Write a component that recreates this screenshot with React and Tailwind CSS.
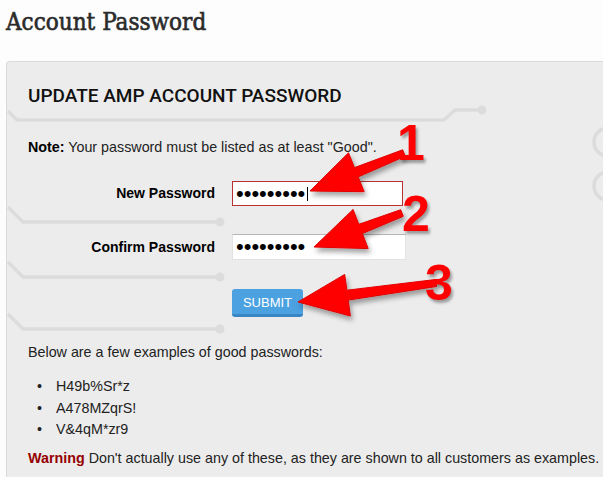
import React from 'react';

// builds a skitch-style arrow polygon from the tip back to the tail
const arrowPoints = (tip, tail, headLen = 50, headW = 21, neckW = 5, tailW = 3.5) => {
  const dx = tail[0] - tip[0];
  const dy = tail[1] - tip[1];
  const len = Math.hypot(dx, dy);
  const ux = dx / len;
  const uy = dy / len;
  const px = -uy;
  const py = ux;
  const bx = tip[0] + ux * headLen;
  const by = tip[1] + uy * headLen;
  const pts = [
    [tip[0], tip[1]],
    [bx + px * headW, by + py * headW],
    [bx + px * neckW, by + py * neckW],
    [tail[0] + px * tailW, tail[1] + py * tailW],
    [tail[0] - px * tailW, tail[1] - py * tailW],
    [bx - px * neckW, by - py * neckW],
    [bx - px * headW, by - py * headW],
  ];
  return pts.map((p) => p.map((v) => v.toFixed(1)).join(',')).join(' ');
};

const arrows = [
  { tip: [310, 191], tail: [404, 153] },
  { tip: [314, 247], tail: [402, 213] },
  { tip: [298, 302], tail: [436, 283] },
];

const numbers = [
  { n: '1', cls: 'left-[397px] top-[118px]' },
  { n: '2', cls: 'left-[402px] top-[189px]' },
  { n: '3', cls: 'left-[425px] top-[258px]' },
];

const PanelDecor = () => (
  <svg className="absolute left-0 top-0 pointer-events-none" width="620" height="440">
    <g transform="translate(-6,-61)" fill="none" stroke="#dcdcdc" strokeWidth="3.5">
      <polyline points="7,110 16,119 443,119 454,109 478,109" />
      <circle cx="481" cy="109" r="4.5" fill="#dcdcdc" stroke="none" />
      {[221, 276, 328].map((y) => (
        <g key={y}>
          <polyline points={`7,${y - 15} 22,${y} 216,${y}`} />
          <circle cx="219" cy={y} r="4.5" fill="#dcdcdc" stroke="none" />
        </g>
      ))}
      <circle cx="607" cy="141" r="14" />
      <circle cx="607" cy="185" r="14" />
    </g>
  </svg>
);

const Dots = () => (
  <span className="text-[22px] leading-none tracking-[0px] text-black">•••••••••</span>
);

export default function App() {
  return (
    <div
      className="relative w-[603px] h-[477px] overflow-hidden bg-[#fdfdfd] text-[#222]"
      style={{ fontFamily: '"Liberation Sans", Arial, sans-serif' }}
    >
      <h1
        className="pl-[6px] pt-[6px] text-[24px] leading-[32px] font-normal text-[#2b2b2b] [-webkit-text-stroke:0.6px_#2b2b2b]"
        style={{ fontFamily: '"DejaVu Serif Condensed", "DejaVu Serif", serif' }}
      >
        Account Password
      </h1>

      <div className="relative ml-[6px] mt-[23px] w-[620px] h-[440px] bg-[#ececec] border-t border-l border-[#dadada] rounded-tl-[4px] pl-[21px] pt-[23px]">
        <PanelDecor />
        <div className="relative">
          <h2 className="text-[19px] leading-[22px] font-medium text-[#111]" style={{ fontFamily: 'Roboto, "Liberation Sans", sans-serif' }}>
            UPDATE AMP ACCOUNT PASSWORD
          </h2>

          <p className="mt-[30px] text-[14.3px] leading-[20px]">
            <span className="font-bold text-black">Note:</span> Your password must be listed as at least "Good".
          </p>

          <div className="mt-[24px] flex items-center">
            <label className="w-[187px] text-right text-[14px] font-bold text-black">New Password</label>
            <div className="ml-[17px] w-[171px] h-[25px] bg-white border border-[#b83232] flex items-center pl-[3px]">
              <Dots />
              <span className="ml-[2px] w-px h-[14px] bg-black" />
            </div>
          </div>

          <div className="mt-[28px] flex items-center">
            <label className="w-[187px] text-right text-[14px] font-bold text-black">Confirm Password</label>
            <div className="ml-[17px] w-[174px] h-[26px] bg-white border border-[#e2e2e2] border-t-[#b5b5b5] flex items-center pl-[3px]">
              <Dots />
            </div>
          </div>

          <button className="mt-[29px] ml-[204px] w-[71px] h-[28px] rounded-[3px] bg-[#4ca1e0] border-b-[3px] border-[#3a86c4] text-white text-[13px] leading-none pt-[2px]">
            SUBMIT
          </button>

          <p className="mt-[25px] text-[14.3px] leading-[20px]">Below are a few examples of good passwords:</p>

          <ul className="mt-[14px] text-[14.3px] leading-[21.5px]">
            {['H49b%Sr*z', 'A478MZqrS!', 'V&4qM*zr9'].map((pw) => (
              <li key={pw} className="flex">
                <span className="w-[28px] pl-[9px]">•</span>
                <span>{pw}</span>
              </li>
            ))}
          </ul>

          <p className="mt-[7px] text-[14.3px] leading-[20px] whitespace-nowrap">
            <span className="font-bold text-[#950000]">Warning</span> Don't actually use any of these, as they are shown to all customers as examples.
          </p>
        </div>
      </div>

      <svg className="absolute left-0 top-0 pointer-events-none" width="603" height="477">
        <defs>
          <filter id="shadow" x="-20%" y="-20%" width="140%" height="150%">
            <feDropShadow dx="2" dy="4" stdDeviation="2.5" floodColor="#000" floodOpacity="0.35" />
          </filter>
        </defs>
        {arrows.map((a, i) => (
          <polygon key={i} points={arrowPoints(a.tip, a.tail)} fill="#ff0000" stroke="#e00000" strokeWidth="1" strokeLinejoin="round" filter="url(#shadow)" />
        ))}
      </svg>

      {numbers.map((d) => (
        <span
          key={d.n}
          className={`absolute ${d.cls} text-[50px] leading-none font-bold text-[#ff0000]`}
          style={{ textShadow: '2px 3px 3px rgba(0,0,0,0.35)' }}
        >
          {d.n}
        </span>
      ))}
    </div>
  );
}
